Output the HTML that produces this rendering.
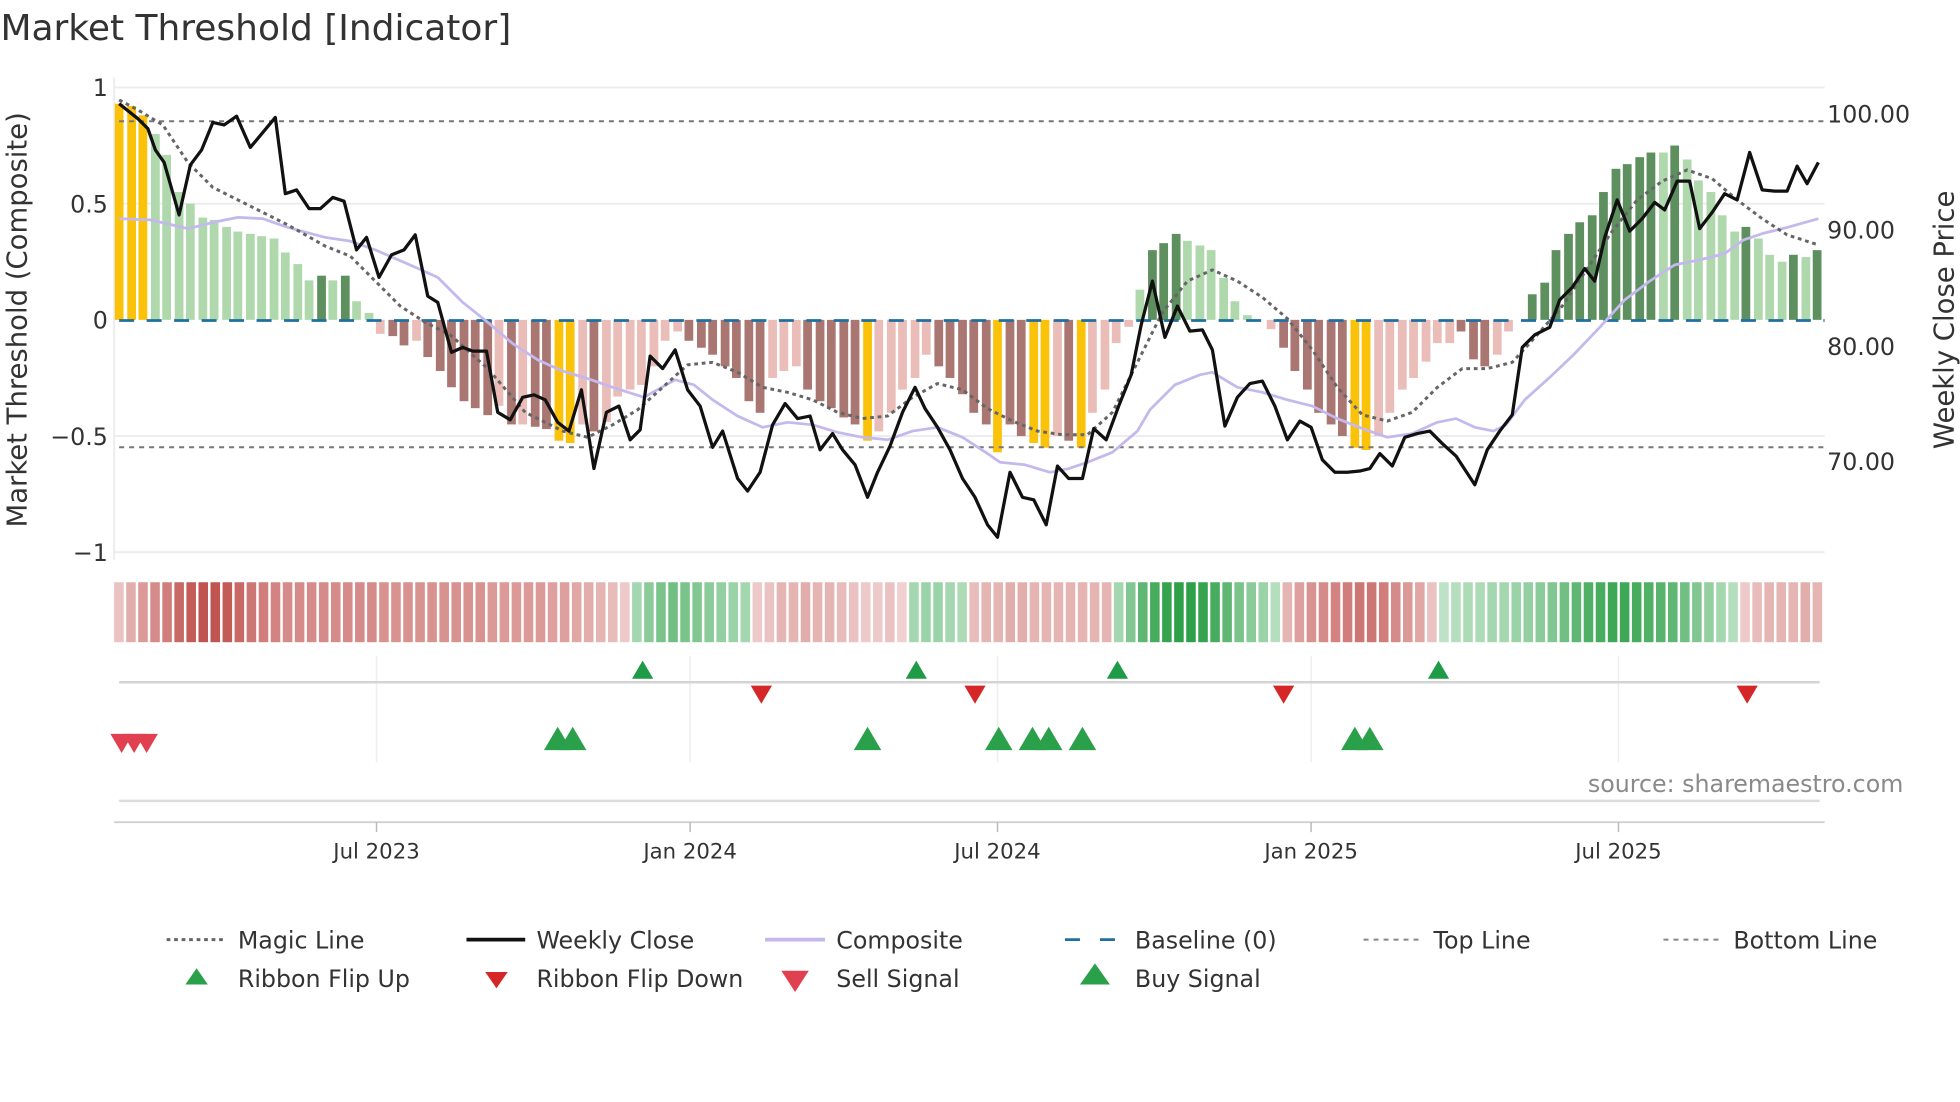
<!DOCTYPE html>
<html><head><meta charset="utf-8"><style>
html,body{margin:0;padding:0;background:#fff;width:1960px;height:1102px;overflow:hidden}
svg{display:block}
text{font-family:"DejaVu Sans","Liberation Sans",sans-serif;fill:#333}
</style></head><body>
<svg id="s" width="1960" height="1102" viewBox="0 0 1568 882" xmlns="http://www.w3.org/2000/svg">
<text x="0" y="32" font-size="28.8">Market Threshold [Indicator]</text>
<g stroke="#ececf0" stroke-width="1.5">
<line x1="91" y1="70" x2="1460" y2="70"/><line x1="91" y1="163" x2="1460" y2="163"/>
<line x1="91" y1="349" x2="1460" y2="349"/><line x1="91" y1="442" x2="1460" y2="442"/>
<line x1="91" y1="62" x2="91" y2="448"/>
</g>
<g id="bars"></g>
<line x1="95" y1="256.5" x2="1460" y2="256.5" stroke="#1f6fa0" stroke-width="2.2" stroke-dasharray="12,10"/>
<line x1="95" y1="97" x2="1460" y2="97" stroke="#777" stroke-width="1.6" stroke-dasharray="4,4"/>
<line x1="95" y1="358" x2="1460" y2="358" stroke="#777" stroke-width="1.6" stroke-dasharray="4,4"/>
<g id="lines"></g>
<g font-size="19" text-anchor="end">
<text x="86" y="77">1</text><text x="86" y="170">0.5</text><text x="86" y="263">0</text>
<text x="86" y="356">−0.5</text><text x="86" y="449">−1</text></g>
<g font-size="19"><text x="1462" y="98">100.00</text><text x="1462" y="191">90.00</text>
<text x="1462" y="284">80.00</text><text x="1462" y="376">70.00</text></g>
<text transform="translate(21,256) rotate(-90)" font-size="22" text-anchor="middle">Market Threshold (Composite)</text>
<text transform="translate(1563,256) rotate(-90)" font-size="22" text-anchor="middle">Weekly Close Price</text>
<g id="rib"></g>
<g stroke="#eeeef2" stroke-width="1.2">
<line x1="301" y1="525" x2="301" y2="610"/><line x1="552" y1="525" x2="552" y2="610"/>
<line x1="798" y1="525" x2="798" y2="610"/><line x1="1049" y1="525" x2="1049" y2="610"/>
<line x1="1295" y1="525" x2="1295" y2="610"/></g>
<line x1="95" y1="546" x2="1456" y2="546" stroke="#d4d4d4" stroke-width="2"/>
<line x1="95" y1="641" x2="1456" y2="641" stroke="#dcdcdc" stroke-width="2"/>
<line x1="91" y1="658" x2="1460" y2="658" stroke="#d0d0d0" stroke-width="1.5"/>
<g stroke="#bbb" stroke-width="1.2"><line x1="301" y1="658" x2="301" y2="666"/><line x1="552" y1="658" x2="552" y2="666"/><line x1="798" y1="658" x2="798" y2="666"/><line x1="1049" y1="658" x2="1049" y2="666"/><line x1="1295" y1="658" x2="1295" y2="666"/></g>
<g id="sig"></g>
<text x="1523" y="634" font-size="19" text-anchor="end" style="fill:#8a8a8a">source: sharemaestro.com</text>
<g font-size="17" text-anchor="middle">
<text x="301" y="687">Jul 2023</text><text x="552" y="687">Jan 2024</text><text x="798" y="687">Jul 2024</text>
<text x="1049" y="687">Jan 2025</text><text x="1295" y="687">Jul 2025</text></g>
<g>
<line x1="133" y1="752" x2="178" y2="752" stroke="#666" stroke-width="2.4" stroke-dasharray="3,3"/>
<line x1="373" y1="752" x2="420" y2="752" stroke="#111" stroke-width="3"/>
<line x1="612" y1="752" x2="660" y2="752" stroke="#c4b8ec" stroke-width="3"/>
<line x1="852" y1="752" x2="897" y2="752" stroke="#1f6fa0" stroke-width="2.2" stroke-dasharray="12,16"/>
<line x1="1091" y1="752" x2="1136" y2="752" stroke="#888" stroke-width="1.6" stroke-dasharray="4,4"/>
<line x1="1331" y1="752" x2="1376" y2="752" stroke="#888" stroke-width="1.6" stroke-dasharray="4,4"/>
<polygon points="148,788 166,788 157,775" fill="#2ba04a"/>
<polygon points="388,778 406,778 397,791" fill="#d62728"/>
<polygon points="625,777 647,777 636,794" fill="#e04050"/>
<polygon points="864,788 888,788 876,771" fill="#2ba04a"/>
</g>
<g font-size="19">
<text x="190" y="759">Magic Line</text><text x="429" y="759">Weekly Close</text><text x="669" y="759">Composite</text>
<text x="908" y="759">Baseline (0)</text><text x="1147" y="759">Top Line</text><text x="1387" y="759">Bottom Line</text>
<text x="190" y="790">Ribbon Flip Up</text><text x="429" y="790">Ribbon Flip Down</text><text x="669" y="790">Sell Signal</text><text x="908" y="790">Buy Signal</text>
</g>
</svg>
<script>
var NS="http://www.w3.org/2000/svg";
function el(p,t,a){var e=document.createElementNS(NS,t);for(var k in a)e.setAttribute(k,a[k]);document.getElementById(p).appendChild(e);return e;}
var C={y:"#fbc20a",g:"#afd9ac",G:"#5e8f5e",p:"#eabdb8",r:"#a97672"};
var bars=[[95,.93,'y'],[105,.92,'y'],[114,.88,'y'],[124,.8,'g'],[133,.71,'g'],[143,.55,'g'],[152,.5,'g'],[162,.44,'g'],[171,.43,'g'],[181,.40,'g'],[190,.38,'g'],[200,.37,'g'],[209,.36,'g'],[219,.35,'g'],[228,.29,'g'],[238,.24,'g'],[247,.17,'g'],[257,.19,'G'],[266,.17,'g'],[276,.19,'G'],[285,.08,'g'],[295,.03,'g'],[304,-.06,'p'],[314,-.07,'r'],[323,-.11,'r'],[333,-.09,'p'],[342,-.16,'r'],[352,-.22,'r'],[361,-.29,'r'],[371,-.35,'r'],[380,-.38,'r'],[390,-.41,'r'],[399,-.37,'p'],[409,-.45,'r'],[418,-.45,'p'],[428,-.46,'r'],[437,-.47,'r'],[447,-.52,'y'],[456,-.53,'y'],[466,-.45,'p'],[475,-.48,'r'],[485,-.44,'p'],[494,-.33,'p'],[504,-.30,'p'],[513,-.28,'p'],[523,-.2,'p'],[532,-.09,'p'],[542,-.05,'p'],[551,-.09,'r'],[561,-.12,'r'],[570,-.15,'r'],[580,-.2,'r'],[589,-.25,'r'],[599,-.35,'r'],[608,-.4,'r'],[618,-.25,'p'],[627,-.22,'p'],[637,-.2,'p'],[646,-.3,'r'],[656,-.35,'r'],[665,-.38,'r'],[675,-.42,'r'],[684,-.45,'r'],[694,-.52,'y'],[703,-.48,'p'],[713,-.4,'p'],[722,-.3,'p'],[732,-.25,'p'],[741,-.15,'p'],[751,-.2,'r'],[760,-.25,'r'],[770,-.32,'r'],[779,-.4,'r'],[789,-.45,'r'],[798,-.57,'y'],[808,-.45,'r'],[817,-.5,'r'],[827,-.53,'y'],[836,-.55,'y'],[846,-.5,'p'],[855,-.52,'r'],[865,-.55,'y'],[874,-.4,'p'],[884,-.3,'p'],[893,-.1,'p'],[903,-.03,'p'],[912,.13,'g'],[922,.3,'G'],[931,.33,'G'],[941,.37,'G'],[950,.34,'g'],[960,.32,'g'],[969,.3,'g'],[979,.18,'g'],[988,.08,'g'],[998,.02,'g'],[1017,-.04,'p'],[1027,-.12,'r'],[1036,-.22,'r'],[1046,-.3,'r'],[1055,-.4,'r'],[1065,-.45,'r'],[1074,-.5,'r'],[1084,-.55,'y'],[1093,-.56,'y'],[1103,-.5,'p'],[1112,-.4,'p'],[1122,-.3,'p'],[1131,-.25,'p'],[1141,-.18,'p'],[1150,-.1,'p'],[1160,-.1,'p'],[1169,-.05,'r'],[1179,-.17,'r'],[1188,-.2,'r'],[1198,-.15,'p'],[1207,-.05,'p'],[1226,.11,'G'],[1236,.16,'G'],[1245,.3,'G'],[1255,.37,'G'],[1264,.42,'G'],[1274,.45,'G'],[1283,.55,'G'],[1293,.65,'G'],[1302,.67,'G'],[1312,.7,'G'],[1321,.72,'G'],[1331,.72,'g'],[1340,.75,'G'],[1350,.69,'g'],[1359,.6,'g'],[1369,.55,'g'],[1378,.45,'g'],[1388,.38,'g'],[1397,.4,'G'],[1407,.35,'g'],[1416,.28,'g'],[1426,.25,'g'],[1435,.28,'G'],[1445,.27,'g'],[1454,.3,'G']];
bars.forEach(function(b){var h=b[1]*186;el('bars','rect',{x:b[0]-3.5,y:h>0?256-h:256,width:7,height:Math.abs(h),fill:C[b[2]]});});
function pl(pts,st){el('lines','polyline',Object.assign({points:pts,fill:'none','stroke-linejoin':'round'},st));}
pl("95,175 120,176 150,183 170,178 190,174 210,175 230,182 260,190 280,193 300,200 330,213 350,222 370,242 390,258 410,275 430,288 450,297 470,303 490,310 515,318 540,304 555,308 570,320 590,333 610,342 630,338 650,340 670,346 690,350 710,352 730,345 750,342 770,350 790,363 800,370 820,372 840,378 855,375 870,370 890,362 910,345 920,328 940,308 960,300 970,298 990,310 1010,314 1030,320 1050,325 1070,335 1090,343 1110,350 1130,347 1150,338 1165,335 1180,342 1195,345 1205,340 1220,320 1240,302 1260,283 1280,262 1300,240 1320,225 1340,212 1360,208 1380,203 1395,192 1410,187 1430,182 1455,175",{stroke:'#c4b8ec','stroke-width':2.2});
pl("95,80 110,88 130,100 150,130 170,150 200,165 230,180 260,197 280,205 300,225 320,245 340,258 360,268 390,295 420,330 450,345 470,350 490,340 510,328 530,310 550,292 570,290 590,298 610,310 630,314 650,320 670,330 690,335 710,333 730,318 750,307 770,312 790,327 810,337 830,345 850,348 870,348 890,330 910,290 930,250 950,225 970,216 990,225 1010,238 1030,255 1050,280 1070,310 1090,332 1110,337 1130,330 1150,310 1170,295 1190,295 1210,290 1230,268 1250,245 1270,215 1290,185 1310,160 1330,145 1350,136 1370,143 1390,160 1410,175 1430,188 1455,196",{stroke:'#666','stroke-width':2.4,'stroke-dasharray':'3,3'});
pl("95,83 110,95 118,103 124,120 131,130 143,172 152,132 161,120 170,98 179,100 189,93 200,118 220,94 228,155 237,152 247,167 256,167 266,158 275,161 285,200 293,190 303,222 313,204 323,200 332,188 342,237 350,242 361,282 370,278 378,281 389,281 398,330 408,336 418,318 427,316 436,320 446,338 455,345 465,312 475,375 485,330 495,325 504,352 512,344 520,285 530,295 540,280 550,312 560,325 570,358 578,345 590,383 598,393 608,378 618,340 628,323 638,335 648,333 656,360 666,347 674,360 684,372 694,398 702,378 712,357 722,330 732,310 740,327 750,342 760,360 770,383 780,398 790,420 798,430 808,378 818,398 827,400 837,420 846,373 855,383 866,383 875,343 885,352 895,325 905,300 913,260 922,225 932,270 942,245 952,265 962,264 970,280 980,341 990,318 1000,307 1010,305 1020,325 1030,352 1040,337 1049,342 1058,368 1068,378 1078,378 1088,377 1096,375 1104,363 1114,373 1124,350 1134,347 1144,345 1154,355 1165,365 1180,388 1190,360 1200,345 1210,332 1218,278 1228,268 1240,262 1248,240 1258,230 1268,215 1276,225 1284,190 1294,160 1304,185 1314,175 1324,162 1332,168 1342,145 1352,145 1360,183 1370,170 1380,155 1390,160 1400,122 1410,152 1420,153 1430,153 1438,133 1446,147 1455,130",{stroke:'#111','stroke-width':2.6});
function rv(i){
 var seg=[[0,42,[-.2,-.35,-.5,-.6,-.7,-.85,-.95,-1,-1,-.95,-.85,-.75,-.7,-.65,-.6,-.6,-.6,-.6,-.6,-.6,-.6,-.6,-.55,-.55,-.55,-.55,-.55,-.55,-.55,-.55,-.55,-.5,-.5,-.5,-.5,-.5,-.45,-.45,-.4,-.35,-.3,-.25,-.15]],
 [43,52,[.3,.45,.55,.6,.55,.5,.45,.4,.35,.3]],[53,65,[-.15,-.2,-.3,-.3,-.35,-.3,-.3,-.25,-.2,-.15,-.15,-.2,-.1]],
 [66,70,[.3,.35,.35,.3,.25]],[71,82,[-.25,-.3,-.3,-.35,-.35,-.3,-.3,-.3,-.3,-.3,-.3,-.3]],
 [83,96,[.3,.5,.7,.85,.95,1,1,.95,.85,.7,.55,.45,.35,.2]],[97,109,[-.3,-.45,-.55,-.6,-.65,-.7,-.75,-.75,-.7,-.6,-.5,-.4,-.2]],
 [110,134,[.15,.2,.25,.25,.3,.3,.35,.4,.45,.5,.6,.7,.8,.85,.9,.9,.85,.8,.75,.7,.6,.5,.4,.3,.2]],[135,141,[-.15,-.25,-.3,-.3,-.3,-.35,-.3]]];
 for(var s of seg)if(i>=s[0]&&i<=s[1])return s[2][i-s[0]];return 0;}
function mix(a,b,t){return 'rgb('+a.map(function(v,k){return Math.round(v+(b[k]-v)*t)}).join(',')+')';}
var w=(1460-91)/142;
for(var i=0;i<142;i++){var v=rv(i),t=Math.abs(v);
 var col=v<0?mix([245,222,222],[192,84,80],t):mix([214,238,219],[46,160,72],t);
 el('rib','rect',{x:91+i*w,y:466,width:w-2,height:48,fill:col});}
function tri(x,y,s,up,c){var h=s*0.85;el('sig','polygon',{points:up?(x-s/2)+','+(y+h/2)+' '+(x+s/2)+','+(y+h/2)+' '+x+','+(y-h/2):(x-s/2)+','+(y-h/2)+' '+(x+s/2)+','+(y-h/2)+' '+x+','+(y+h/2),fill:c});}
[514,733,894,1151].forEach(function(x){tri(x,536,17,1,'#1f9a46');});
[609,780,1027,1398].forEach(function(x){tri(x,556,17,0,'#d62728');});
[446,458,694,799,826,839,866,1084,1096].forEach(function(x){tri(x,591,22,1,'#2ba04a');});
[97,107,117].forEach(function(x){tri(x,595,18,0,'#e04050');});
</script>
</body></html>
